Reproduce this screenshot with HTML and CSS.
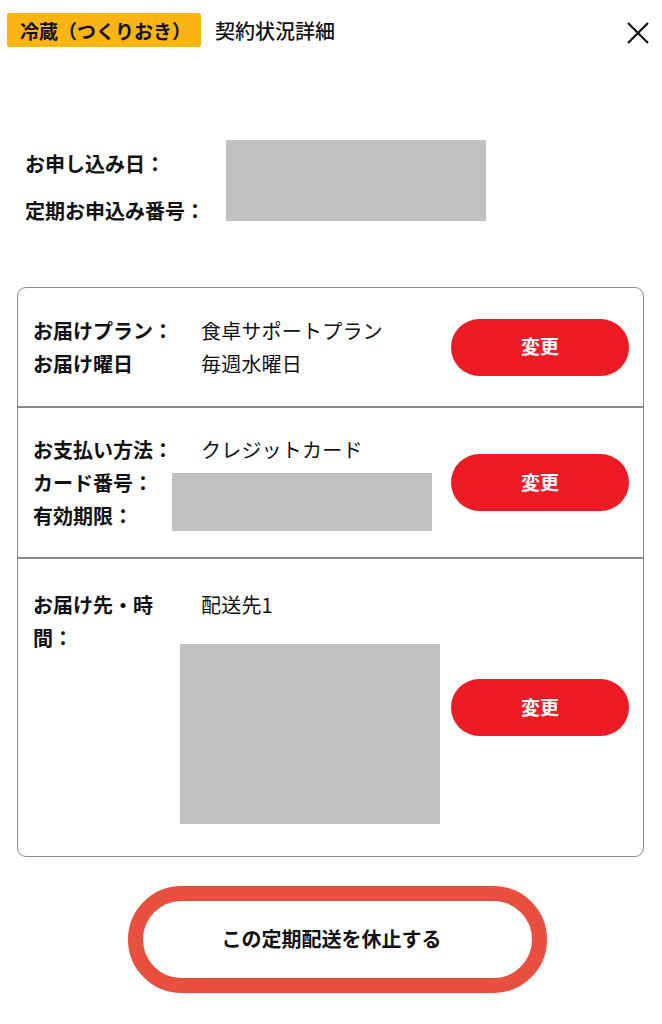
FILE: index.html
```html
<!DOCTYPE html>
<html lang="ja">
<head>
<meta charset="utf-8">
<title>契約状況詳細</title>
<link rel="stylesheet" href="styles.css">
</head>
<body>
<header class="header">
  <span class="badge">冷蔵（つくりおき）</span>
  <h1 class="title">契約状況詳細</h1>
  <button class="close" aria-label="閉じる">
    <svg width="22" height="22" viewBox="0 0 22 22"><path d="M1 1L21 21M21 1L1 21" stroke="#111" stroke-width="2.2" fill="none"/></svg>
  </button>
</header>

<section class="summary">
  <div class="sum-label">お申し込み日：</div>
  <div class="mask sum-mask"></div>
  <div class="sum-label">定期お申込み番号：</div>
</section>

<section class="card">
  <div class="row row-plan">
    <div class="info grid-plan">
      <div class="label">お届けプラン：</div><div class="value">食卓サポートプラン</div>
      <div class="label">お届け曜日</div><div class="value">毎週水曜日</div>
    </div>
    <button class="change">変更</button>
  </div>
  <div class="row row-pay">
    <div class="info grid-pay">
      <div class="label nowrap">お支払い方法：</div><div class="value pay-value">クレジットカード</div>
      <div class="label nowrap">カード番号：</div>
      <div class="mask pay-mask"></div>
      <div class="label nowrap">有効期限：</div>
    </div>
    <button class="change">変更</button>
  </div>
  <div class="row row-addr">
    <div class="info flex-addr">
      <div class="label addr-label">お届け先・時間：</div>
      <div class="addr-values">
        <div class="value addr-value">配送先1</div>
        <div class="mask addr-mask"></div>
      </div>
    </div>
    <button class="change">変更</button>
  </div>
</section>

<div class="pause-wrap">
  <button class="pause">この定期配送を休止する</button>
</div>
</body>
</html>
```

FILE: styles.css
```css
* { box-sizing: border-box; }
html, body { margin: 0; padding: 0; background: #fff; }
body {
  width: 662px;
  font-family: "Noto Sans CJK JP", "Noto Sans", sans-serif;
  color: #111;
}
.header {
  display: flex;
  align-items: center;
  height: 62px;
  padding: 0 12px 0 7px;
}
.badge {
  display: flex;
  align-items: center;
  height: 34px;
  padding: 0 10px 0 13px;
  background: #fbb414;
  border-radius: 3px;
  font-size: 19px;
  font-weight: 700;
  color: #111;
  margin-top: -2px;
}
.title {
  margin: 0 0 0 14px;
  font-size: 20px;
  font-weight: 500;
  flex: 1;
  margin-top: -2px;
}
.close {
  border: 0;
  background: none;
  padding: 0;
  width: 24px;
  height: 24px;
  display: flex;
  align-items: center;
  justify-content: center;
  margin-top: 3px;
}
.summary {
  display: grid;
  grid-template-columns: 201px 260px;
  grid-auto-rows: 47px;
  margin: 78px 0 0 25px;
}
.sum-label {
  font-size: 20px;
  font-weight: 700;
  line-height: 47px;
}
.sum-mask {
  grid-column: 2;
  grid-row: 1 / span 2;
  height: 81px;
}
.mask { background: #c1c1c1; }
.card {
  margin: 53px 18px 0 17px;
  border: 1.5px solid #8c8c8c;
  border-radius: 9px;
}
.row {
  display: flex;
  align-items: center;
  justify-content: space-between;
  padding: 26px 14px 26px 15px;
  border-top: 2px solid #8c8c8c;
}
.row:first-child { border-top: 0; }
.row-plan { height: 118px; }
.row-pay { height: 151px; }
.row-addr { height: 299px; }
.info { flex: 1; }
.label {
  font-size: 20px;
  font-weight: 700;
  line-height: 33px;
}
.nowrap { white-space: nowrap; }
.value {
  font-size: 20px;
  font-weight: 400;
  line-height: 33px;
  letter-spacing: 0.2px;
}
.grid-plan {
  display: grid;
  grid-template-columns: 168px 1fr;
}
.grid-pay {
  display: grid;
  grid-template-columns: 139px 260px;
  grid-auto-rows: 33px;
}
.pay-value { padding-left: 29px; white-space: nowrap; }
.pay-mask {
  grid-column: 2;
  grid-row: 2 / span 2;
  margin-top: 7px;
  height: 58px;
}
.flex-addr {
  display: flex;
  align-items: flex-start;
  margin-top: -4px;
}
.addr-label {
  width: 128px;
  margin-right: 19px;
}
.addr-values { width: 260px; }
.addr-value { padding-left: 21px; }
.addr-mask {
  height: 180px;
  margin-top: 23px;
}
.change {
  width: 178px;
  height: 57px;
  border: 0;
  border-radius: 29px;
  background: #ed1c24;
  color: #fff;
  font-family: "Noto Sans CJK JP", "Noto Sans", sans-serif;
  font-size: 19px;
  font-weight: 700;
  flex: none;
  padding: 0 0 3px;
}
.pause-wrap {
  padding: 29px 0 0 128px;
}
.pause {
  width: 419px;
  height: 107px;
  border: 15px solid #e84f3f;
  border-radius: 54px;
  background: #fff;
  font-family: "Noto Sans CJK JP", "Noto Sans", sans-serif;
  font-size: 20px;
  font-weight: 700;
  color: #111;
  padding: 0 12px 2px 0;
}
```
